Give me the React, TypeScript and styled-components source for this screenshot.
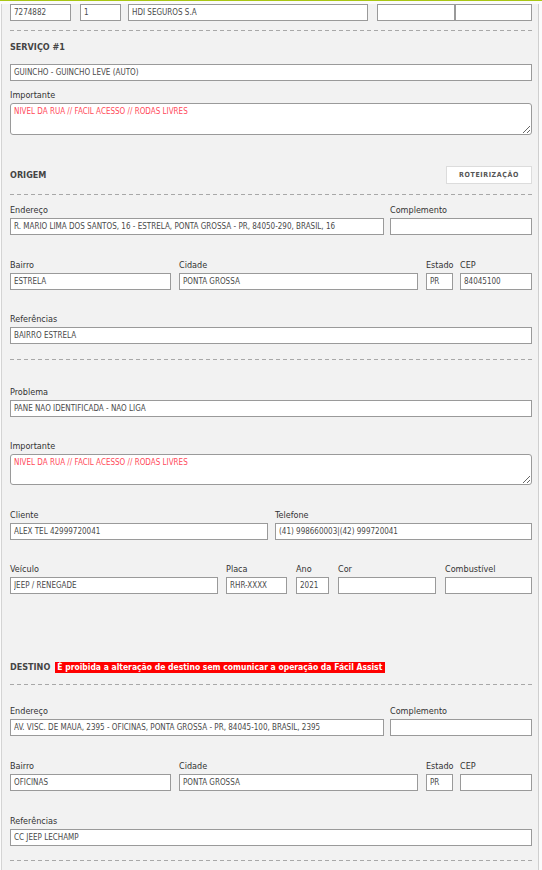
import React from 'react';
import styled, { createGlobalStyle } from 'styled-components';

const GlobalStyle = createGlobalStyle`
  html, body {
    margin: 0;
    padding: 0;
    background: #fbfbfb;
  }
  body {
    font-family: "DejaVu Sans Condensed", "DejaVu Sans", sans-serif;
  }
`;

const TopLine = styled.div`
  height: 1px;
  background: #a9c614;
`;

const Page = styled.div`
  box-sizing: border-box;
  width: 538px;
  margin-left: 1px;
  padding: 0 6px 10px 8px;
  background: #f2f2f2;
  border-left: 1px solid #d4d4d4;
  border-right: 1px solid #cfcfcf;
`;

const Row = styled.div<{ $mt?: number }>`
  display: flex;
  align-items: flex-end;
  margin-top: ${p => p.$mt ?? 0}px;
`;

const FieldBox = styled.div<{ $w?: number; $gap?: number }>`
  display: flex;
  flex-direction: column;
  box-sizing: border-box;
  ${p => (p.$w ? `width: ${p.$w}px; flex: none;` : 'flex: 1; min-width: 0;')}
  margin-right: ${p => p.$gap ?? 0}px;
`;

const Label = styled.label`
  height: 12px;
  line-height: 12px;
  margin-bottom: 2px;
  font-size: 9px;
  color: #333;
  white-space: nowrap;
`;

const Input = styled.input`
  box-sizing: border-box;
  width: 100%;
  height: 17px;
  margin: 0;
  padding: 0 3px;
  border: 1px solid #9a9a9a;
  background: #fff;
  font-family: inherit;
  font-size: 8px;
  color: #4a4a4a;
  outline: none;
`;

const Area = styled.textarea<{ $h: number }>`
  display: block;
  box-sizing: border-box;
  width: 100%;
  height: ${p => p.$h}px;
  margin: 0;
  padding: 3px 3px;
  border: 1px solid #9a9a9a;
  border-radius: 3px;
  background: #fff;
  font-family: inherit;
  font-size: 8px;
  color: #ff4a5a;
  outline: none;
`;

const Dashed = styled.div<{ $mt: number }>`
  height: 1px;
  margin-top: ${p => p.$mt}px;
  background-image: linear-gradient(to right, #a8a8a8 4px, transparent 4px);
  background-size: 7px 1px;
  background-repeat: repeat-x;
`;

const SectionHead = styled.div<{ $mt: number; $h?: number }>`
  display: flex;
  align-items: center;
  justify-content: space-between;
  height: ${p => p.$h ?? 12}px;
  margin-top: ${p => p.$mt}px;
`;

const TitleGroup = styled.div`
  display: flex;
  align-items: center;
  gap: 5px;
`;

const Title = styled.span`
  font-size: 9px;
  font-weight: bold;
  color: #444;
`;

const Warning = styled.span`
  display: inline-block;
  height: 11px;
  line-height: 11px;
  padding: 0 3px 0 2px;
  background: #ff0000;
  color: #fff;
  font-size: 8.5px;
  font-weight: bold;
  white-space: nowrap;
`;

const RouteButton = styled.button`
  box-sizing: border-box;
  width: 86px;
  height: 18px;
  padding: 0;
  border: 1px solid #dcdcdc;
  background: #fff;
  font-family: inherit;
  font-size: 7px;
  font-weight: bold;
  letter-spacing: 0.6px;
  color: #555;
`;

type FieldProps = {
  label?: string;
  value?: string;
  w?: number;
  gap?: number;
};

const Field = ({ label, value = '', w, gap }: FieldProps) => (
  <FieldBox $w={w} $gap={gap}>
    {label && <Label>{label}</Label>}
    <Input readOnly value={value} />
  </FieldBox>
);

const Note = ({ label, value, h, mt }: { label: string; value: string; h: number; mt: number }) => (
  <Row $mt={mt}>
    <FieldBox>
      <Label>{label}</Label>
      <Area $h={h} readOnly value={value} />
    </FieldBox>
  </Row>
);

const App = () => {
  return (
    <>
      <GlobalStyle />
      <TopLine />
      <Page>
        <Row $mt={3}>
          <Field value="7274882" w={61} gap={9} />
          <Field value="1" w={41} gap={7} />
          <Field value="HDI SEGUROS S.A" w={240} gap={9} />
          <Field w={78} />
          <Field />
        </Row>
        <Dashed $mt={9} />

        <SectionHead $mt={10}>
          <Title>SERVIÇO #1</Title>
        </SectionHead>
        <Row $mt={11}>
          <Field value="GUINCHO - GUINCHO LEVE (AUTO)" />
        </Row>
        <Note mt={8} h={32} label="Importante" value="NIVEL DA RUA // FACIL ACESSO // RODAS LIVRES" />

        <SectionHead $mt={31} $h={18}>
          <Title>ORIGEM</Title>
          <RouteButton>ROTEIRIZAÇÃO</RouteButton>
        </SectionHead>
        <Dashed $mt={10} />
        <Row $mt={9}>
          <Field label="Endereço" value="R. MARIO LIMA DOS SANTOS, 16 - ESTRELA, PONTA GROSSA - PR, 84050-290, BRASIL, 16" w={374} gap={6} />
          <Field label="Complemento" />
        </Row>
        <Row $mt={24}>
          <Field label="Bairro" value="ESTRELA" w={161} gap={8} />
          <Field label="Cidade" value="PONTA GROSSA" w={239} gap={8} />
          <Field label="Estado" value="PR" w={27} gap={7} />
          <Field label="CEP" value="84045100" />
        </Row>
        <Row $mt={23}>
          <Field label="Referências" value="BAIRRO ESTRELA" />
        </Row>
        <Dashed $mt={15} />

        <Row $mt={26}>
          <Field label="Problema" value="PANE NÃO IDENTIFICADA - NAO LIGA" />
        </Row>
        <Note mt={23} h={31} label="Importante" value="NIVEL DA RUA // FACIL ACESSO // RODAS LIVRES" />
        <Row $mt={24}>
          <Field label="Cliente" value="ALEX TEL 42999720041" w={258} gap={7} />
          <Field label="Telefone" value="(41) 998660003|(42) 999720041" />
        </Row>
        <Row $mt={23}>
          <Field label="Veículo" value="JEEP / RENEGADE" w={208} gap={8} />
          <Field label="Placa" value="RHR-XXXX" w={61} gap={9} />
          <Field label="Ano" value="2021" w={33} gap={9} />
          <Field label="Cor" w={98} gap={9} />
          <Field label="Combustível" />
        </Row>

        <SectionHead $mt={67}>
          <TitleGroup>
            <Title>DESTINO</Title>
            <Warning>É proibida a alteração de destino sem comunicar a operação da Fácil Assist</Warning>
          </TitleGroup>
        </SectionHead>
        <Dashed $mt={11} />
        <Row $mt={20}>
          <Field label="Endereço" value="AV. VISC. DE MAUÁ, 2395 - OFICINAS, PONTA GROSSA - PR, 84045-100, BRASIL, 2395" w={374} gap={6} />
          <Field label="Complemento" />
        </Row>
        <Row $mt={24}>
          <Field label="Bairro" value="OFICINAS" w={161} gap={8} />
          <Field label="Cidade" value="PONTA GROSSA" w={239} gap={8} />
          <Field label="Estado" value="PR" w={27} gap={7} />
          <Field label="CEP" />
        </Row>
        <Row $mt={24}>
          <Field label="Referências" value="CC JEEP LECHAMP" />
        </Row>
        <Dashed $mt={14} />
      </Page>
    </>
  );
};

export default App;
